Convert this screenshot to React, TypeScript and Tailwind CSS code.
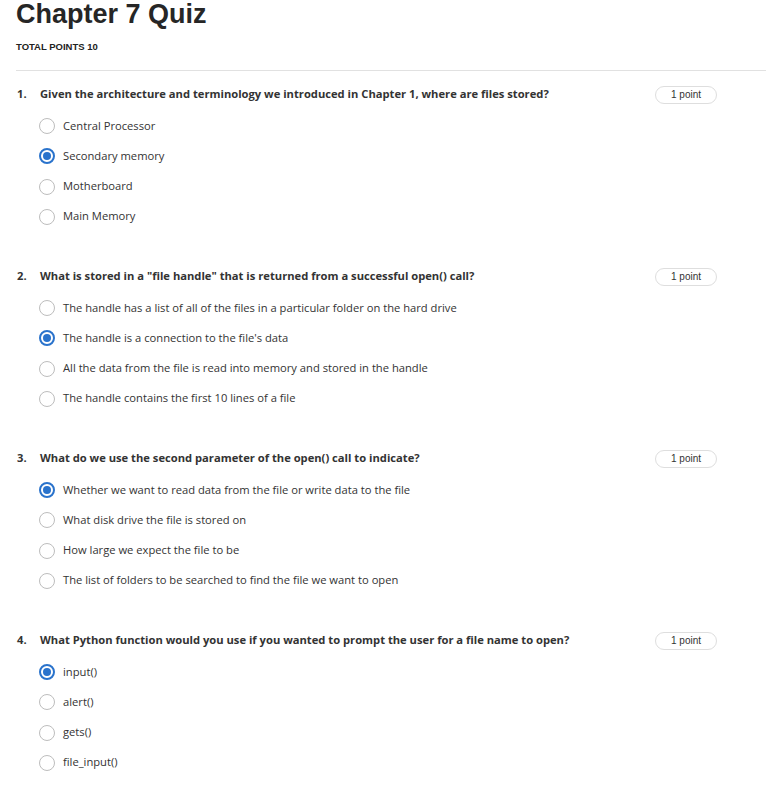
const questions = [
  {
    title:
      "Given the architecture and terminology we introduced in Chapter 1, where are files stored?",
    options: ["Central Processor", "Secondary memory", "Motherboard", "Main Memory"],
    answer: 1,
  },
  {
    title: 'What is stored in a "file handle" that is returned from a successful open() call?',
    options: [
      "The handle has a list of all of the files in a particular folder on the hard drive",
      "The handle is a connection to the file's data",
      "All the data from the file is read into memory and stored in the handle",
      "The handle contains the first 10 lines of a file",
    ],
    answer: 1,
  },
  {
    title: "What do we use the second parameter of the open() call to indicate?",
    options: [
      "Whether we want to read data from the file or write data to the file",
      "What disk drive the file is stored on",
      "How large we expect the file to be",
      "The list of folders to be searched to find the file we want to open",
    ],
    answer: 0,
  },
  {
    title: "What Python function would you use if you wanted to prompt the user for a file name to open?",
    options: ["input()", "alert()", "gets()", "file_input()"],
    answer: 0,
  },
];

function Radio({ checked }: { checked: boolean }) {
  if (checked) {
    return (
      <span className="flex h-4 w-4 shrink-0 items-center justify-center rounded-full border-2 border-[#2a73cc] bg-white">
        <span className="h-2 w-2 rounded-full bg-[#2a73cc]" />
      </span>
    );
  }
  return <span className="h-4 w-4 shrink-0 rounded-full border-[1.5px] border-[#bdbdbd] bg-white" />;
}

export default function App() {
  return (
    <div className="min-h-screen bg-white pl-4 text-[#333]">
      {/* HEADER */}
      <h1 className="text-[27px] font-bold leading-[28px] text-[#262626] [font-family:'Liberation_Sans',Arial,sans-serif]">
        Chapter 7 Quiz
      </h1>
      <p className="mt-[13px] h-3 text-[9.5px] font-bold leading-3 text-[#222] [font-family:'Liberation_Sans',Arial,sans-serif]">
        TOTAL POINTS 10
      </p>
      <div className="mt-[17px] h-px bg-[#e1e1e1]" />

      <div className="mt-[13px] [font-family:'Open_Sans',sans-serif]">
        {questions.map((q, i) => (
          <div key={i} className="mb-[34px]">
            <div className="flex h-5 items-center pr-[49px]">
              <span className="w-6 shrink-0 pl-px text-[11.2px] font-bold text-[#333]">{i + 1}.</span>
              <span className="flex-1 text-[11.2px] font-bold text-[#333]">{q.title}</span>
              <span className="mt-px flex h-[18px] w-[62px] shrink-0 items-center justify-center rounded-full border border-[#dedede] text-[10px] text-[#333] [font-family:'Liberation_Sans',Arial,sans-serif]">
                1 point
              </span>
            </div>
            <div className="mt-[7px] pl-[23px]">
              {q.options.map((opt, j) => (
                <div key={j} className="flex h-[30.25px] items-center gap-2">
                  <Radio checked={j === q.answer} />
                  <span className="text-[11.2px] text-[#333]">{opt}</span>
                </div>
              ))}
            </div>
          </div>
        ))}
      </div>
    </div>
  );
}
